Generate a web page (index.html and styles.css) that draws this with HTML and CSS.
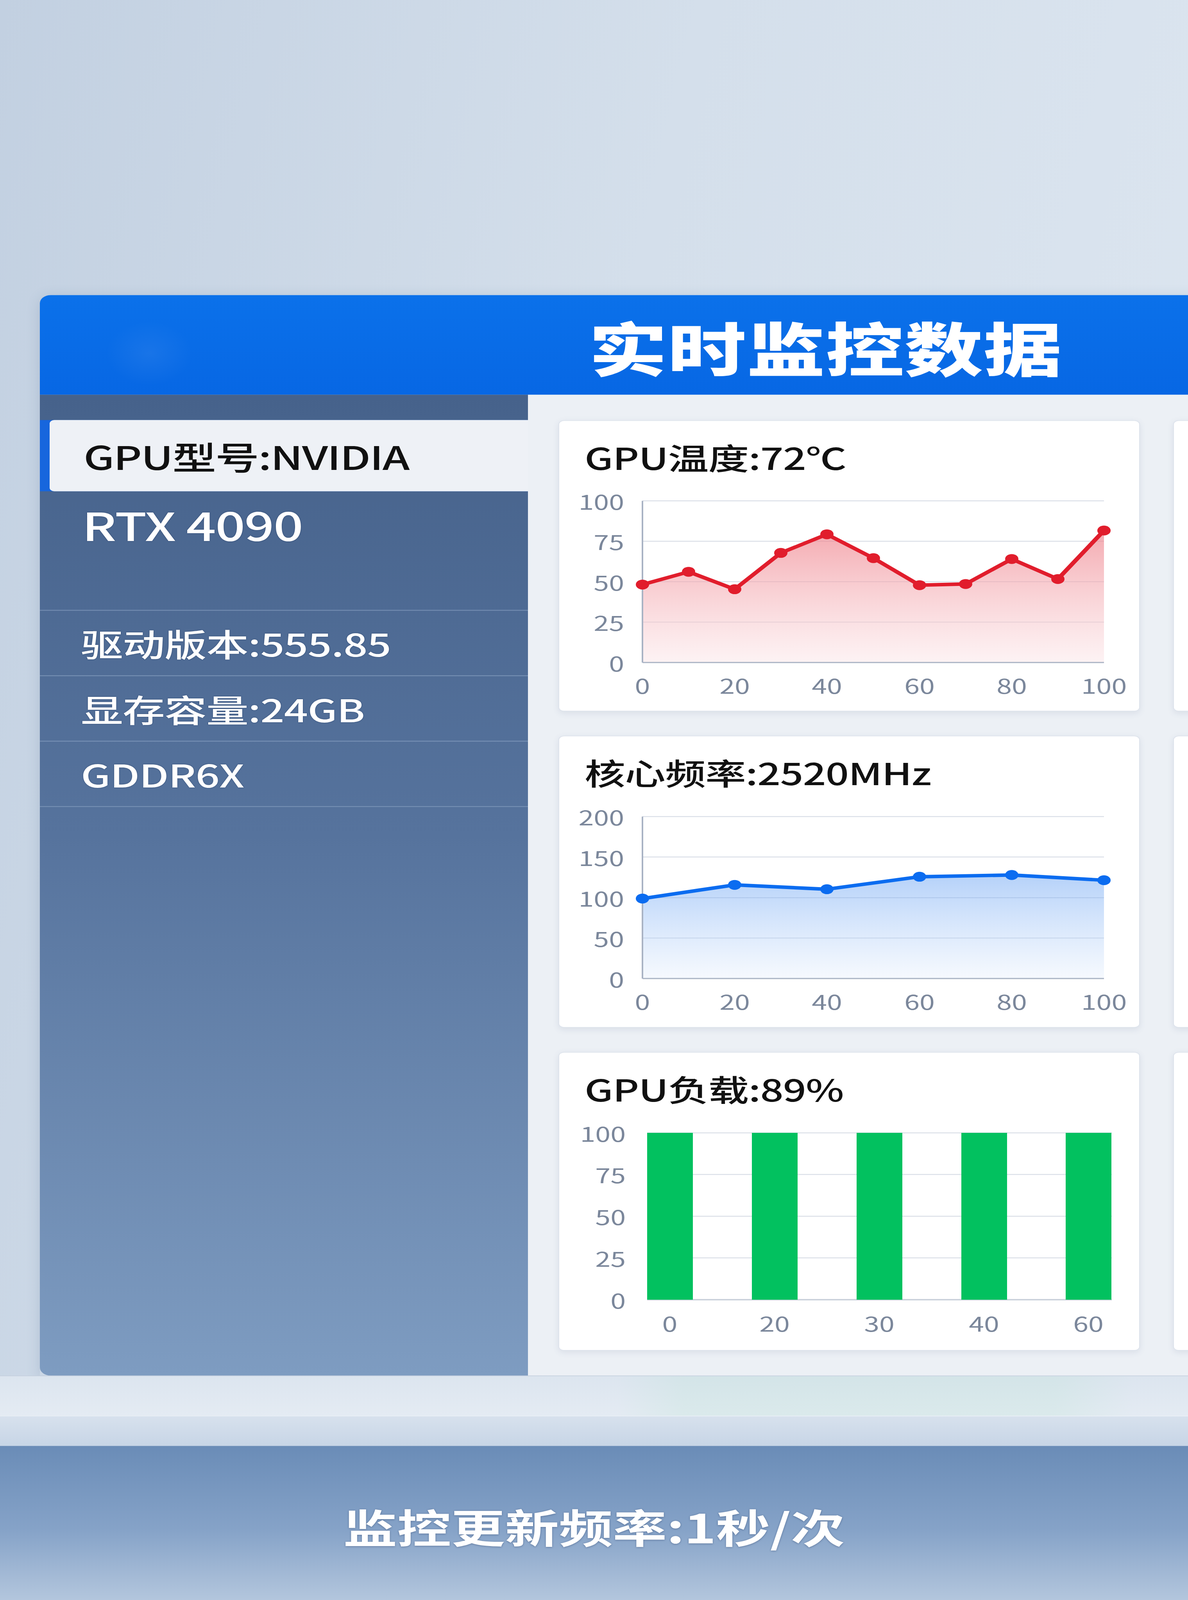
FILE: index.html
```html
<!DOCTYPE html>
<html lang="zh-CN">
<head>
    <meta charset="UTF-8">
    <meta name="viewport" content="width=device-width, initial-scale=1.0">
    <title>实时监控数据</title>
    <link rel="stylesheet" href="styles.css">
</head>
<body>
<div class="screen">
<div class="page" id="page">
    <div class="panel">
        <header class="panelHead">
            <h1 class="title">实时监控数据</h1>
        </header>
        <div class="panelBody">
            <aside class="side">
                <div class="sideBlock">
                    <div class="active"><div class="sel">GPU型号:NVIDIA</div></div>
                    <div class="model">RTX 4090</div>
                </div>
                <div class="sideRow">驱动版本:555.85</div>
                <div class="sideRow">显存容量:24GB</div>
                <div class="sideRow">GDDR6X</div>
            </aside>

            <main class="content">
                <!-- temperature -->
                <div class="card">
                    <div class="cardTitle">GPU温度:72℃</div>
                    <svg class="chart" width="1488" height="816" viewBox="0 0 1488 816">
                        <defs>
                            <linearGradient id="redFill" x1="0" y1="0" x2="0" y2="1">
                                <stop offset="0" stop-color="#ee7c86" stop-opacity="0.65"/>
                                <stop offset="1" stop-color="#fbe3e6" stop-opacity="0.45"/>
                            </linearGradient>
                        </defs>
                        <g class="grid">
                            <line x1="215" y1="90" x2="1396" y2="90"/>
                            <line x1="215" y1="229" x2="1396" y2="229"/>
                            <line x1="215" y1="368" x2="1396" y2="368"/>
                            <line x1="215" y1="507" x2="1396" y2="507"/>
                        </g>
                        <polygon fill="url(#redFill)" points="215,646 215,378 333,334 451,394 569,269 687,205 806,287 924,380 1042,376 1160,290 1278,359 1396,192 1396,646"/>
                        <g class="axis">
                            <line x1="215" y1="90" x2="215" y2="646"/>
                            <line x1="215" y1="646" x2="1396" y2="646"/>
                        </g>
                        <polyline class="lineRed" points="215,378 333,334 451,394 569,269 687,205 806,287 924,380 1042,376 1160,290 1278,359 1396,192"/>
                        <g class="dotsRed">
                            <circle cx="215" cy="378" r="17"/><circle cx="333" cy="334" r="17"/>
                            <circle cx="451" cy="394" r="17"/><circle cx="569" cy="269" r="17"/>
                            <circle cx="687" cy="205" r="17"/><circle cx="806" cy="287" r="17"/>
                            <circle cx="924" cy="380" r="17"/><circle cx="1042" cy="376" r="17"/>
                            <circle cx="1160" cy="290" r="17"/><circle cx="1278" cy="359" r="17"/>
                            <circle cx="1396" cy="192" r="17"/>
                        </g>
                        <g class="yLabels">
                            <text x="168" y="90">100</text><text x="168" y="229">75</text>
                            <text x="168" y="368">50</text><text x="168" y="507">25</text>
                            <text x="168" y="646">0</text>
                        </g>
                        <g class="xLabels">
                            <text x="215" y="723">0</text><text x="451" y="723">20</text>
                            <text x="687" y="723">40</text><text x="924" y="723">60</text>
                            <text x="1160" y="723">80</text><text x="1396" y="723">100</text>
                        </g>
                    </svg>
                </div>
                <div class="card"></div>

                <!-- clock -->
                <div class="card">
                    <div class="cardTitle">核心频率:2520MHz</div>
                    <svg class="chart" width="1488" height="816" viewBox="0 0 1488 816">
                        <defs>
                            <linearGradient id="blueFill" x1="0" y1="0" x2="0" y2="1">
                                <stop offset="0" stop-color="#5b9af2" stop-opacity="0.45"/>
                                <stop offset="1" stop-color="#e4eefc" stop-opacity="0.35"/>
                            </linearGradient>
                        </defs>
                        <g class="grid">
                            <line x1="215" y1="91" x2="1396" y2="91"/>
                            <line x1="215" y1="230" x2="1396" y2="230"/>
                            <line x1="215" y1="370" x2="1396" y2="370"/>
                            <line x1="215" y1="509" x2="1396" y2="509"/>
                        </g>
                        <polygon fill="url(#blueFill)" points="215,648 215,373 451,326 687,341 924,298 1160,292 1396,310 1396,648"/>
                        <g class="axis">
                            <line x1="215" y1="91" x2="215" y2="648"/>
                            <line x1="215" y1="648" x2="1396" y2="648"/>
                        </g>
                        <polyline class="lineBlue" points="215,373 451,326 687,341 924,298 1160,292 1396,310"/>
                        <g class="dotsBlue">
                            <circle cx="215" cy="373" r="17"/><circle cx="451" cy="326" r="17"/>
                            <circle cx="687" cy="341" r="17"/><circle cx="924" cy="298" r="17"/>
                            <circle cx="1160" cy="292" r="17"/><circle cx="1396" cy="310" r="17"/>
                        </g>
                        <g class="yLabels">
                            <text x="168" y="91">200</text><text x="168" y="230">150</text>
                            <text x="168" y="370">100</text><text x="168" y="509">50</text>
                            <text x="168" y="648">0</text>
                        </g>
                        <g class="xLabels">
                            <text x="215" y="725">0</text><text x="451" y="725">20</text>
                            <text x="687" y="725">40</text><text x="924" y="725">60</text>
                            <text x="1160" y="725">80</text><text x="1396" y="725">100</text>
                        </g>
                    </svg>
                </div>
                <div class="card"></div>

                <!-- load -->
                <div class="card">
                    <div class="cardTitle">GPU负载:89%</div>
                    <svg class="chart" width="1488" height="838" viewBox="0 0 1488 838">
                        <g class="grid">
                            <line x1="227" y1="91" x2="1416" y2="91"/>
                            <line x1="227" y1="234" x2="1416" y2="234"/>
                            <line x1="227" y1="378" x2="1416" y2="378"/>
                            <line x1="227" y1="521" x2="1416" y2="521"/>
                        </g>
                        <line class="base" x1="227" y1="665" x2="1416" y2="665"/>
                        <g class="bars">
                            <rect x="227" y="91" width="117" height="574"/>
                            <rect x="495" y="91" width="117" height="574"/>
                            <rect x="763" y="91" width="117" height="574"/>
                            <rect x="1031" y="91" width="117" height="574"/>
                            <rect x="1298" y="91" width="117" height="574"/>
                        </g>
                        <g class="yLabels">
                            <text x="172" y="91">100</text><text x="172" y="234">75</text>
                            <text x="172" y="378">50</text><text x="172" y="521">25</text>
                            <text x="172" y="665">0</text>
                        </g>
                        <g class="xLabels">
                            <text x="285" y="744">0</text><text x="553" y="744">20</text>
                            <text x="821" y="744">30</text><text x="1089" y="744">40</text>
                            <text x="1356" y="744">60</text>
                        </g>
                    </svg>
                </div>
                <div class="card"></div>
            </main>
        </div>
    </div>
    <div class="shelf"></div>
    <div class="ledge"></div>
    <footer class="foot">监控更新频率:1秒/次</footer>
</div>
</div>
<script src="fit.js"></script>
</body>
</html>
```

FILE: fit.js
```js
// design is 3040 x 5504, stretch it to whatever screen we get (大屏 style)
var page = document.getElementById('page');
function fitScreen() {
    var sx = window.innerWidth / 3040;
    var sy = window.innerHeight / 5504;
    page.style.transform = 'scale(' + sx + ',' + sy + ')';
}
fitScreen();
window.addEventListener('resize', fitScreen);
```

FILE: styles.css
```css
html, body {
    margin: 0;
    padding: 0;
    height: 100%;
    overflow: hidden;
}
body {
    font-family: "Noto Sans CJK SC", "Noto Sans", sans-serif;
    background: #d4dfeb;
}
.screen {
    width: 100vw;
    height: 100vh;
    overflow: hidden;
}
.page {
    width: 3040px;
    height: 5504px;
    overflow: hidden;
    transform-origin: 0 0;
    box-sizing: border-box;
    padding-top: 1015px;
    background: linear-gradient(100deg, #c2d0e1 0%, #d4dfeb 45%, #dee7f1 100%);
}
.panel {
    margin-left: 102px;
    width: 4022px;
    border-radius: 28px 28px 0 0;
    overflow: hidden;
    box-shadow: 0 10px 40px rgba(60, 90, 130, 0.18);
}
.panelHead {
    height: 343px;
    display: flex;
    align-items: center;
    justify-content: center;
    background:
        radial-gradient(circle at 280px 200px, rgba(120, 170, 240, 0.14), rgba(120, 170, 240, 0) 110px),
        linear-gradient(#0b71ea, #0767e4);
}
.title {
    margin: 0;
    color: #fff;
    font-size: 200px;
    font-weight: 900;
    letter-spacing: 2px;
    line-height: 1;
    padding-top: 8px;
}
.panelBody {
    display: grid;
    grid-template-columns: 1249px 1fr;
    height: 3374px;
}

/* sidebar */
.side {
    background: linear-gradient(#46628b, #56739d 45%, #7e9cc1);
    padding-top: 87px;
    border-bottom-left-radius: 28px;
}
.sideBlock {
    height: 653px;
    border-bottom: 3px solid rgba(190, 210, 235, 0.35);
}
.active {
    background: #1766dd;
    padding-left: 25px;
}
.sel {
    height: 245px;
    background: #eef1f6;
    border-radius: 12px 0 0 12px;
    display: flex;
    align-items: center;
    padding-left: 87px;
    font-size: 112px;
    font-weight: 500;
    color: #111;
    letter-spacing: -2px;
}
.model {
    margin-top: 40px;
    padding-left: 108px;
    color: #fff;
    font-size: 134px;
    font-weight: 500;
    letter-spacing: -2px;
    line-height: 1.1;
    text-shadow: 0 0 4px rgba(20, 40, 80, 0.5);
}
.sideRow {
    height: 222px;
    display: flex;
    align-items: center;
    padding-left: 105px;
    color: #fff;
    font-size: 108px;
    font-weight: 500;
    letter-spacing: -1px;
    border-bottom: 3px solid rgba(190, 210, 235, 0.35);
    text-shadow: 0 0 4px rgba(20, 40, 80, 0.5);
}

/* content */
.content {
    background: #ecf0f5;
    padding: 88px 0 86px 78px;
    display: grid;
    grid-template-columns: 1488px 1488px;
    grid-template-rows: 1001px 1004px 1027px;
    column-gap: 85px;
    row-gap: 84px;
}
.card {
    background: #fff;
    border: 2px solid #dde3ec;
    border-radius: 14px;
    box-shadow: 0 6px 18px rgba(80, 100, 140, 0.12);
    box-sizing: border-box;
    padding-top: 60px;
    overflow: hidden;
}
.cardTitle {
    height: 125px;
    display: flex;
    align-items: center;
    padding-left: 65px;
    font-size: 104px;
    font-weight: 500;
    color: #111;
    letter-spacing: -1px;
}
.chart {
    display: block;
    margin-left: -2px;
}
.grid line {
    stroke: #d8dde6;
    stroke-width: 3;
}
.axis line {
    stroke: #a9b3c4;
    stroke-width: 4;
}
.base {
    stroke: #c9d0da;
    stroke-width: 5;
}
.lineRed {
    fill: none;
    stroke: #e11d2c;
    stroke-width: 12;
    stroke-linejoin: round;
}
.dotsRed circle {
    fill: #e11d2c;
}
.lineBlue {
    fill: none;
    stroke: #0b6cf0;
    stroke-width: 12;
    stroke-linejoin: round;
}
.dotsBlue circle {
    fill: #0b6cf0;
}
.bars rect {
    fill: #02c15f;
}
.yLabels text {
    font-family: "Noto Sans CJK SC", "Noto Sans", sans-serif;
    font-size: 70px;
    fill: #7b879b;
    text-anchor: end;
    dominant-baseline: central;
}
.xLabels text {
    font-family: "Noto Sans CJK SC", "Noto Sans", sans-serif;
    font-size: 70px;
    fill: #7b879b;
    text-anchor: middle;
    dominant-baseline: central;
}

/* bottom */
.shelf {
    height: 136px;
    border-top: 2px solid #c4cfdd;
    background:
        linear-gradient(90deg, rgba(160, 225, 190, 0) 1580px, rgba(160, 225, 190, 0.14) 1750px, rgba(160, 225, 190, 0.14) 2700px, rgba(160, 225, 190, 0) 2900px),
        linear-gradient(#dce5ef, #e4ebf3);
}
.ledge {
    height: 102px;
    background: linear-gradient(#d7e1ed, #c7d5e6);
    border-top: 2px solid #eef3f8;
}
.foot {
    height: 510px;
    padding-top: 20px;
    display: flex;
    align-items: center;
    justify-content: center;
    background: linear-gradient(#6a8cb7, #86a3c8 55%, #b3c6dd);
    color: #fff;
    font-size: 138px;
    font-weight: 700;
    text-shadow: 0 2px 6px rgba(30, 50, 90, 0.45);
}
```
